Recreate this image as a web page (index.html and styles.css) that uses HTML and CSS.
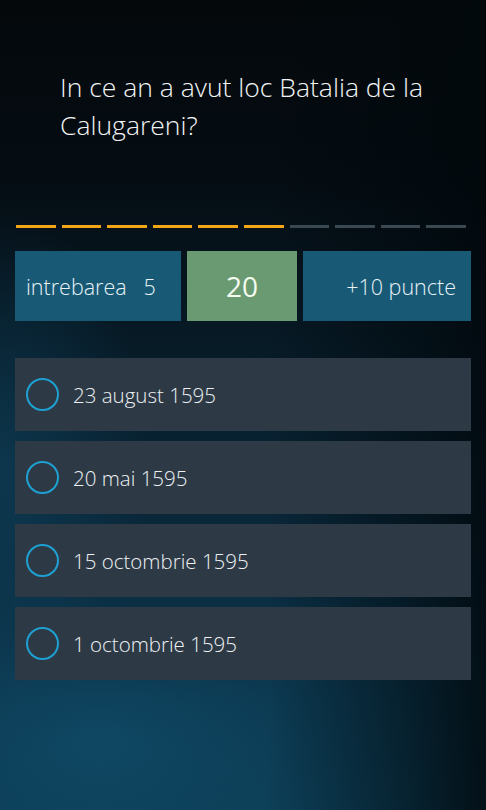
FILE: index.html
```html
<!DOCTYPE html>
<html>
<head>
<meta charset="utf-8">
<title>Quiz</title>
<link rel="stylesheet" href="styles.css">
</head>
<body>
  <div class="screen">
    <h1 class="question">In ce an a avut loc Batalia de la Calugareni?</h1>

    <div class="progress">
      <span class="dash done"></span>
      <span class="dash done"></span>
      <span class="dash done"></span>
      <span class="dash done"></span>
      <span class="dash done"></span>
      <span class="dash done"></span>
      <span class="dash"></span>
      <span class="dash"></span>
      <span class="dash"></span>
      <span class="dash"></span>
    </div>

    <div class="info">
      <div class="tile tile-count">intrebarea&nbsp;&nbsp; 5</div>
      <div class="tile tile-timer">20</div>
      <div class="tile tile-points">+10 puncte</div>
    </div>

    <div class="answers">
      <div class="answer"><span class="radio"></span>23 august 1595</div>
      <div class="answer"><span class="radio"></span>20 mai 1595</div>
      <div class="answer"><span class="radio"></span>15 octombrie 1595</div>
      <div class="answer"><span class="radio"></span>1 octombrie 1595</div>
    </div>
  </div>
</body>
</html>
```

FILE: styles.css
```css
html, body {
  margin: 0;
  padding: 0;
}

body {
  width: 486px;
  height: 810px;
  overflow: hidden;
  font-family: "Open Sans", "Noto Sans", sans-serif;
  font-weight: 300;
  color: #f2f4f5;
  background-color: #04080b;
  background-image:
    linear-gradient(to right, rgba(1, 8, 12, 0) 55%, rgba(1, 8, 12, 0.55) 85%, rgba(1, 8, 12, 0.85) 100%),
    radial-gradient(ellipse 150px 260px at 0px 470px, rgba(16, 70, 98, 0.55), rgba(16, 70, 98, 0) 100%),
    radial-gradient(ellipse 200px 110px at 100px 740px, rgba(18, 82, 112, 0.5), rgba(18, 82, 112, 0) 100%),
    linear-gradient(to bottom, #04080b 0px, #050d13 180px, #071a26 340px, #0a2a3d 560px, #0c3a52 700px, #0d4059 810px);
}

.screen {
  display: flex;
  flex-direction: column;
}

.question {
  margin: 0;
  padding: 68px 30px 0 60px;
  font-size: 26.5px;
  font-weight: 300;
  line-height: 38px;
  height: 76px;
}

.progress {
  display: flex;
  gap: 6px;
  margin: 81px 20px 0 16px;
}

.dash {
  flex: 1;
  height: 3px;
  background: #3a4852;
}

.dash.done {
  background: #f2a516;
}

.info {
  display: flex;
  gap: 6px;
  margin: 23px 15px 0 15px;
  height: 70px;
}

.tile {
  display: flex;
  align-items: center;
  font-size: 21.5px;
  color: #e8f2f6;
}

.tile-count {
  width: 166px;
  padding-left: 11px;
  box-sizing: border-box;
  background: #185a76;
}

.tile-timer {
  width: 110px;
  justify-content: center;
  background: #6a9a72;
  font-size: 28px;
  font-weight: 400;
  color: #f4fbef;
}

.tile-points {
  flex: 1;
  justify-content: flex-end;
  padding-right: 15px;
  background: #185a76;
}

.answers {
  display: flex;
  flex-direction: column;
  gap: 10px;
  margin: 37px 15px 0 15px;
}

.answer {
  display: flex;
  align-items: center;
  height: 73px;
  padding-left: 11px;
  background: #2d3a46;
  font-size: 20.5px;
  color: #eef1f3;
}

.radio {
  width: 29px;
  height: 29px;
  border: 2px solid #1ea0d2;
  border-radius: 50%;
  margin-right: 14px;
}
```
